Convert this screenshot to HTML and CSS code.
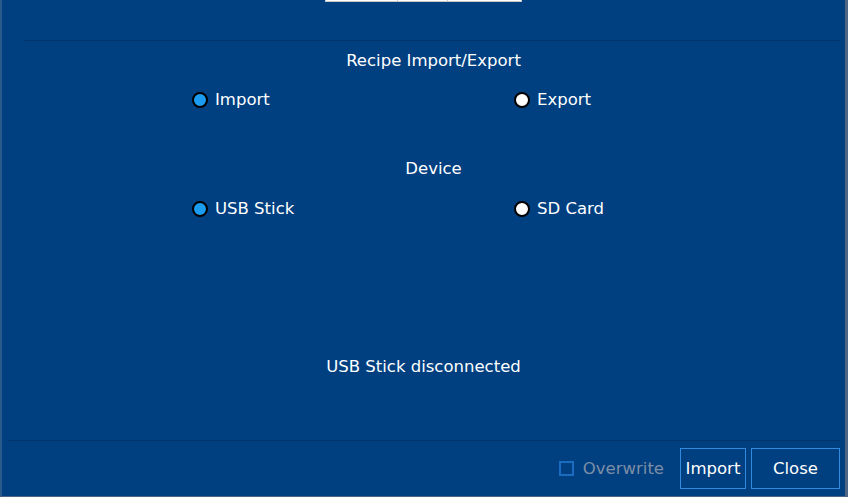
FILE: index.html
```html
<!DOCTYPE html>
<html lang="en">
<head>
    <meta charset="UTF-8">
    <title>Recipe Import/Export</title>
    <link rel="stylesheet" href="styles.css">
</head>
<body>
    <div class="dialog">
        <div class="top">
            <div class="table-edge">
                <span class="cell c1"></span>
                <span class="cell c2"></span>
                <span class="cell c3"></span>
            </div>
        </div>

        <div class="content">
            <div class="title">Recipe Import/Export</div>
            <div class="options">
                <label class="option"><span class="radio checked"></span>Import</label>
                <label class="option"><span class="radio"></span>Export</label>
            </div>

            <div class="title device">Device</div>
            <div class="options device-options">
                <label class="option"><span class="radio checked"></span>USB Stick</label>
                <label class="option"><span class="radio"></span>SD Card</label>
            </div>

            <div class="status">USB Stick disconnected</div>
        </div>

        <div class="footer">
            <label class="overwrite"><span class="checkbox"></span>Overwrite</label>
            <button class="btn btn-import">Import</button>
            <button class="btn btn-close">Close</button>
        </div>
    </div>
</body>
</html>
```

FILE: styles.css
```css
* {
    margin: 0;
    padding: 0;
    box-sizing: border-box;
}

body {
    font-family: 'DejaVu Sans', sans-serif;
    background-color: #003f80;
    color: #ffffff;
    width: 848px;
    height: 497px;
    overflow: hidden;
}

.dialog {
    height: 497px;
    display: flex;
    flex-direction: column;
    background-color: #003f80;
    border-left: 2px solid #2a5a8c;
    border-right: 3px solid #4d6683;
    border-bottom: 1px solid #4d6683;
}

/* Top strip and divider */
.top {
    height: 41px;
    margin-left: 22px;
    margin-right: 5px;
    border-bottom: 1px solid #00346c;
}

.table-edge {
    display: flex;
    margin-left: 301px;
    width: 197px;
    height: 2px;
    background: #ffffff;
    border: 1px solid #c9c9c9;
    border-top: none;
}

.cell {
    height: 100%;
}

.c1 { width: 72px; border-right: 1px solid #c9c9c9; }
.c2 { width: 50px; border-right: 1px solid #c9c9c9; }
.c3 { flex: 1; }

/* Main content */
.content {
    flex: 1;
    display: flex;
    flex-direction: column;
    padding-top: 10px;
}

.title {
    font-size: 16.5px;
    line-height: 19px;
    text-align: center;
    padding-left: 20px;
}

.device {
    margin-top: 50px;
}

.options {
    display: grid;
    grid-template-columns: 322px 1fr;
    padding-left: 190px;
    margin-top: 20px;
}

.device-options {
    margin-top: 21px;
}

.option {
    display: flex;
    align-items: center;
    gap: 7px;
    font-size: 16.5px;
    line-height: 19px;
}

.radio {
    width: 16px;
    height: 16px;
    border-radius: 50%;
    border: 2.5px solid #000000;
    background: #ffffff;
}

.radio.checked {
    background: #1c9cf0;
}

.status {
    margin-top: 139px;
    font-size: 16.5px;
    line-height: 19px;
    text-align: center;
}

/* Footer */
.footer {
    height: 56px;
    margin-left: 6px;
    margin-right: 5px;
    border-top: 1px solid #00346c;
    display: flex;
    justify-content: flex-end;
    align-items: flex-start;
    padding-top: 7px;
    gap: 5px;
}

.overwrite {
    display: flex;
    align-items: center;
    gap: 9px;
    height: 40px;
    margin-right: 11px;
    font-size: 16.5px;
    color: #7c8ea5;
}

.checkbox {
    width: 15px;
    height: 15px;
    border: 2px solid #1a6cc0;
}

.btn {
    height: 41px;
    font-family: 'DejaVu Sans', sans-serif;
    font-size: 16.5px;
    color: #ffffff;
    background: #003f80;
    border: 1px solid #2f8ae0;
}

.btn-import {
    width: 66px;
}

.btn-close {
    width: 89px;
}
```
